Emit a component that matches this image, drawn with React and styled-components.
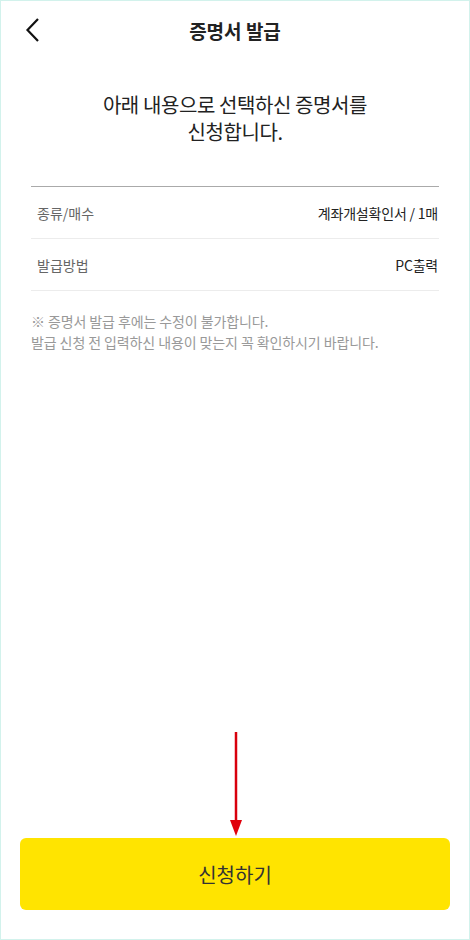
import React from "react";
import styled, { createGlobalStyle } from "styled-components";

const GlobalStyle = createGlobalStyle`
  html, body {
    margin: 0;
    padding: 0;
    background: #fff;
  }
  * {
    box-sizing: border-box;
  }
`;

const Page = styled.div`
  position: relative;
  width: 470px;
  height: 940px;
  border: 1px solid #d2f2ec;
  background: #fff;
  display: flex;
  flex-direction: column;
  font-family: "Noto Sans CJK KR", "Noto Sans", sans-serif;
  color: #222;
`;

const Header = styled.header`
  position: relative;
  height: 58px;
  display: flex;
  align-items: center;
  justify-content: center;
`;

const BackButton = styled.button`
  position: absolute;
  left: 18px;
  top: 14px;
  width: 28px;
  height: 30px;
  padding: 0;
  border: none;
  background: none;
  cursor: pointer;
  display: flex;
  align-items: center;
  justify-content: center;
`;

const Title = styled.h1`
  margin: 0;
  font-size: 19px;
  font-weight: 700;
  color: #222;
`;

const Intro = styled.p`
  margin: 32px 0 0;
  text-align: center;
  font-size: 20px;
  line-height: 27px;
  color: #222;
  letter-spacing: -0.4px;
`;

const InfoTable = styled.div`
  margin: 41px 30px 0;
  border-top: 1px solid #aaa;
`;

const InfoRow = styled.div`
  height: 52px;
  display: flex;
  align-items: center;
  justify-content: space-between;
  padding: 0 1px 0 6px;
  border-bottom: 1px solid #ececec;
  font-size: 14px;
`;

const Label = styled.span`
  color: #666;
`;

const Value = styled.span`
  color: #222;
  letter-spacing: -0.2px;
`;

const Notice = styled.div`
  margin: 20px 30px 0;
  font-size: 14px;
  line-height: 21px;
  color: #999;
  letter-spacing: -0.1px;
`;

const Spacer = styled.div`
  flex: 1;
`;

const Footer = styled.div`
  position: relative;
  padding: 0 19px 29px;
`;

const SubmitButton = styled.button`
  width: 100%;
  height: 72px;
  border: none;
  border-radius: 6px;
  background: #ffe400;
  font-family: inherit;
  font-size: 20px;
  color: #333;
  cursor: pointer;
`;

const Arrow = styled.svg`
  position: absolute;
  left: 227px;
  top: -108px;
`;

const rows = [
  { label: "종류/매수", value: "계좌개설확인서 / 1매" },
  { label: "발급방법", value: "PC출력" },
];

export default function App() {
  return (
    <>
      <GlobalStyle />
      <Page>
        <Header>
          <BackButton aria-label="뒤로">
            <svg width="16" height="26" viewBox="0 0 16 26">
              <path
                d="M13 2 L2.5 13 L13 24"
                fill="none"
                stroke="#111"
                strokeWidth="2.2"
              />
            </svg>
          </BackButton>
          <Title>증명서 발급</Title>
        </Header>
        <Intro>
          아래 내용으로 선택하신 증명서를
          <br />
          신청합니다.
        </Intro>
        <InfoTable>
          {rows.map((row) => (
            <InfoRow key={row.label}>
              <Label>{row.label}</Label>
              <Value>{row.value}</Value>
            </InfoRow>
          ))}
        </InfoTable>
        <Notice>
          ※ 증명서 발급 후에는 수정이 불가합니다.
          <br />
          발급 신청 전 입력하신 내용이 맞는지 꼭 확인하시기 바랍니다.
        </Notice>
        <Spacer />
        <Footer>
          <Arrow width="16" height="108" viewBox="0 0 16 108">
            <line x1="8" y1="2" x2="8" y2="92" stroke="#d8000c" strokeWidth="2.5" />
            <path d="M2 90 L14 90 L8 106 Z" fill="#e0000c" />
          </Arrow>
          <SubmitButton>신청하기</SubmitButton>
        </Footer>
      </Page>
    </>
  );
}
